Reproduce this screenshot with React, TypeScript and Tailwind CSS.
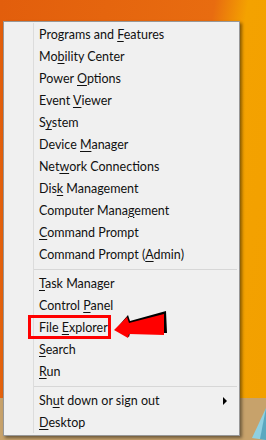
import React from "react";

type Item = { pre: string; key: string; post: string; submenu?: boolean; boxed?: boolean };

const groups: Item[][] = [
  [
    { pre: "Programs and ", key: "F", post: "eatures" },
    { pre: "Mo", key: "b", post: "ility Center" },
    { pre: "Power ", key: "O", post: "ptions" },
    { pre: "Event ", key: "V", post: "iewer" },
    { pre: "S", key: "y", post: "stem" },
    { pre: "Device ", key: "M", post: "anager" },
    { pre: "Net", key: "w", post: "ork Connections" },
    { pre: "Dis", key: "k", post: " Management" },
    { pre: "Computer Mana", key: "g", post: "ement" },
    { pre: "", key: "C", post: "ommand Prompt" },
    { pre: "Command Prompt (", key: "A", post: "dmin)" },
  ],
  [
    { pre: "", key: "T", post: "ask Manager" },
    { pre: "Control ", key: "P", post: "anel" },
    { pre: "File ", key: "E", post: "xplorer", boxed: true },
    { pre: "", key: "S", post: "earch" },
    { pre: "", key: "R", post: "un" },
  ],
  [
    { pre: "Sh", key: "u", post: "t down or sign out", submenu: true },
    { pre: "", key: "D", post: "esktop" },
  ],
];

function MenuRow({ item }: { item: Item }) {
  return (
    <div className="relative flex h-[22px] items-center pl-[5px] pr-[12px] pt-[2px] text-[12.5px] leading-none text-[#111]">
      <span className="whitespace-nowrap">
        {item.pre}
        <span className="underline underline-offset-[2px]">{item.key}</span>
        {item.post}
      </span>
      {item.submenu && (
        <span className="ml-auto h-0 w-0 border-y-[4px] border-l-[4px] border-y-transparent border-l-black" />
      )}
      {item.boxed && (
        <span className="absolute left-[-6px] top-[-1px] h-[24px] w-[83px] border-[3px] border-[#ff0000]" />
      )}
    </div>
  );
}

function Arrow() {
  return (
    <svg className="absolute left-[112px] top-[309px]" width="56" height="32" viewBox="112 309 56 32">
      <polygon
        points="116,329 128,315 130,321 166,311 167,333 130,333 129,337"
        fill="#000"
      />
      <polygon
        points="114,330 127,317 129,323 164,314 164,335 129,334 128,338"
        fill="#ff0000"
      />
    </svg>
  );
}

export default function App() {
  return (
    <div
      className="relative flex h-[440px] w-[266px] flex-col overflow-hidden"
      style={{ fontFamily: '"Segoe UI", Lato, "Noto Sans", sans-serif' }}
    >
      <div className="flex-1 bg-[linear-gradient(100deg,#e25e0c_0%,#e86c10_64%,#f4a200_74%,#f2a000_100%)]" />
      <div className="flex h-[42px] items-end justify-end bg-[#c7a26b]">
        <svg width="14" height="32" viewBox="0 0 14 32">
          <polygon points="14,0 0,30 14,32" fill="#8fd0e0" />
          <polygon points="14,0 8,31 14,32" fill="#5aa8c0" />
        </svg>
      </div>

      <div className="absolute left-[3px] top-[21px] flex h-[415px] w-[237px] border border-[#979797] bg-[#f0f0f0] py-[1px] pb-[2px] shadow-[2px_2px_3px_rgba(0,0,0,0.45)]">
        <div className="w-[29px] shrink-0" />
        <div className="flex flex-1 flex-col border-l border-[#dcdcdc]">
          {groups.map((g, gi) => (
            <div key={gi} className="flex flex-col">
              {gi > 0 && <div className="mb-[2px] mr-[2px] mt-[4px] h-px bg-[#d7d7d7]" />}
              {g.map((it) => (
                <MenuRow key={it.pre + it.key + it.post} item={it} />
              ))}
            </div>
          ))}
        </div>
      </div>

      <Arrow />
    </div>
  );
}
